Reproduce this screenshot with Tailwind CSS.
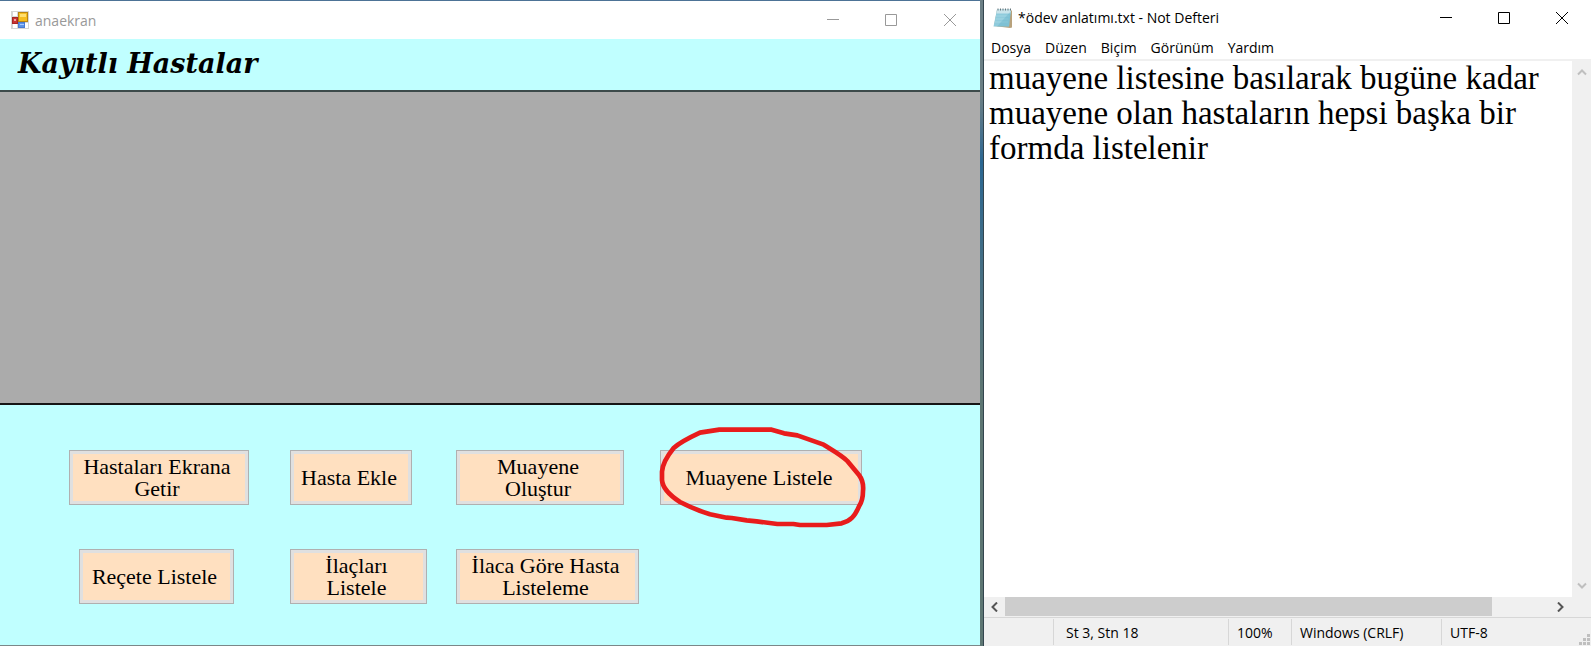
<!DOCTYPE html>
<html lang="tr">
<head>
<meta charset="utf-8">
<title>anaekran</title>
<script src="https://cdn.jsdelivr.net/npm/@tailwindcss/browser@4"></script>
</head>
<body class="h-screen overflow-hidden bg-white text-black font-['Open_Sans',sans-serif] text-[14px]">
<div class="grid h-full grid-cols-[980fr_4px_607fr]">

  <!-- Patient form -->
  <main class="flex min-w-0 flex-col border-t border-b border-t-[#4d7396] border-b-[#7b8788] bg-[#c0ffff]">
    <header class="flex h-[38px] shrink-0 items-center bg-white pl-[11px] text-[#999999]">
      <svg class="size-[18px]" viewBox="0 0 18 18" aria-hidden="true">
        <rect width="18" height="18" fill="#d5d5d5"/><path d="M2 1h4v4H2zM2 13h4v4H2zM14 12h3v5h-3z" fill="#fff"/>
        <rect x="7.500" y="1.500" width="9" height="9" fill="#f5bd20" stroke="#b98511"/><path d="M9 3h6v3H9z" fill="#ffdf70"/>
        <rect x="1.500" y="6.500" width="5" height="6" fill="#c83434" stroke="#a82424"/><path d="M3 8h2v2H3z" fill="#f3a0a0"/>
        <rect x="7.500" y="11.500" width="6" height="5" fill="#5b92e8" stroke="#4a7bd0"/><path d="M9 13h4v1H9z" fill="#a9ccff"/>
      </svg>
      <span class="ml-[6px]">anaekran</span>
      <div class="ml-auto flex h-full">
        <button class="grid w-[58px] place-items-center" aria-label="Simge durumuna küçült"><svg class="size-3" viewBox="0 0 12 12"><path d="M0 5.500h12" stroke="#999"/></svg></button>
        <button class="grid w-[58px] place-items-center" aria-label="Ekranı kapla"><svg class="size-3" viewBox="0 0 12 12"><path d="M.5.5h11v11H.5z" fill="none" stroke="#999"/></svg></button>
        <button class="grid w-[60px] place-items-center" aria-label="Kapat"><svg class="size-3" viewBox="0 0 12 12"><path d="M0 0l12 12M12 0L0 12" stroke="#999"/></svg></button>
      </div>
    </header>
    <h1 class="h-[51px] shrink-0 pl-[18px] font-['DejaVu_Serif',serif] text-[27px] leading-[50px] font-bold italic whitespace-nowrap">Kayıtlı Hastalar</h1>
    <section class="min-h-0 flex-1 border-y-2 border-t-[#3c4a4a] border-b-[#151515] bg-[#ababab]" aria-label="Kayıtlı hastalar"></section>
    <section class="grid h-[240px] shrink-0 grid-cols-[69fr_221fr_166fr_204fr_320fr] grid-rows-[55px_55px] gap-y-[44px] pt-[45px] font-['Liberation_Serif',serif] text-[22px] leading-[22px]">
      <button class="col-start-2 w-[180px] border border-[#b0b0b0] bg-[#ffe0c0] pr-1 shadow-[inset_0_0_0_3px_#e0e0e0]">Hastaları Ekrana<br>Getir</button>
      <button class="w-[122px] border border-[#b0b0b0] bg-[#ffe0c0] pr-1 shadow-[inset_0_0_0_3px_#e0e0e0]">Hasta Ekle</button>
      <button class="w-[168px] border border-[#b0b0b0] bg-[#ffe0c0] pr-1 shadow-[inset_0_0_0_3px_#e0e0e0]">Muayene<br>Oluştur</button>
      <div class="relative w-[202px]">
        <button class="size-full border border-[#b0b0b0] bg-[#ffe0c0] pr-1 shadow-[inset_0_0_0_3px_#e0e0e0]">Muayene Listele</button>
        <svg class="pointer-events-none absolute -top-[50px] -left-[20px] h-[150px] w-[260px] max-w-none" viewBox="0 0 780 450" aria-hidden="true">
          <path d="M180 98L238 89H395L432 100L472 106L551 134C590 158 608 168 622 183L657 225Q672 245 669 273Q669 300 658 317C644 350 632 362 605 370L560 375H480L460 372H412L350 364L320 361L275 354L260 353L210 343Q165 329 120 306Q68 272 66 240V215Q68 185 101 144C120 127 150 112 180 98Z" fill="none" stroke="#e81c1c" stroke-width="14" stroke-linejoin="round"/>
        </svg>
      </div>
      <button class="col-start-2 ml-[10px] w-[155px] border border-[#b0b0b0] bg-[#ffe0c0] pr-1 shadow-[inset_0_0_0_3px_#e0e0e0]">Reçete Listele</button>
      <button class="w-[137px] border border-[#b0b0b0] bg-[#ffe0c0] pr-1 shadow-[inset_0_0_0_3px_#e0e0e0]">İlaçları<br>Listele</button>
      <button class="w-[183px] border border-[#b0b0b0] bg-[#ffe0c0] pr-1 shadow-[inset_0_0_0_3px_#e0e0e0]">İlaca Göre Hasta<br>Listeleme</button>
    </section>
  </main>

  <!-- Desktop visible between the windows -->
  <div class="border-r border-[#34464f] bg-linear-to-b from-[#6b7f85] from-15% via-[#2a6792] via-25% to-[#5d7673] to-60%"></div>

  <!-- Notepad -->
  <section class="flex min-w-0 flex-col bg-white">
    <header class="flex h-[35px] shrink-0 items-center pl-[9px]">
      <svg class="h-5 w-5" viewBox="0 0 20 20" aria-hidden="true">
        <path d="M4 2l15 .5v17l-2 .5L1 18z" fill="#b8a27c"/>
        <path d="M4 1.500h14L16 18.500H.5z" fill="#8fcbdc"/><path d="M4 1.500h14l-.4 4H3.300z" fill="#c9e4eb"/>
        <path d="M3 8h13M2.500 11h13M2 14h13" stroke="#a3d6e3"/><path d="M4 18.500L18 3 16 18.500z" fill="#65b2c9" opacity=".4"/>
        <path d="M5 .5v2M7.500.5v2M10 .5v2M12.500.5v2M15 .5v2M17.500.5v2" stroke="#65747a"/>
      </svg>
      <span class="ml-[5px] whitespace-nowrap">*ödev anlatımı.txt - Not Defteri</span>
      <div class="ml-auto flex h-full">
        <button class="grid w-[58px] place-items-center" aria-label="Simge durumuna küçült"><svg class="size-3" viewBox="0 0 12 12"><path d="M0 5.500h12" stroke="#000"/></svg></button>
        <button class="grid w-[58px] place-items-center" aria-label="Ekranı kapla"><svg class="size-3" viewBox="0 0 12 12"><path d="M.5.5h11v11H.5z" fill="none" stroke="#000"/></svg></button>
        <button class="grid w-[58px] place-items-center" aria-label="Kapat"><svg class="size-3" viewBox="0 0 12 12"><path d="M0 0l12 12M12 0L0 12" stroke="#000"/></svg></button>
      </div>
    </header>
    <nav class="flex h-[26px] shrink-0 items-center gap-[14px] border-b-2 border-[#f0f0f0] pl-[7px]">
      <button>Dosya</button><button>Düzen</button><button>Biçim</button><button>Görünüm</button><button>Yardım</button>
    </nav>
    <div class="flex min-h-0 flex-1">
      <textarea aria-label="Metin" wrap="off" spellcheck="false" class="min-w-0 flex-1 resize-none overflow-hidden pl-[5px] font-['Liberation_Serif',serif] text-[33px] leading-[35px] outline-none">muayene listesine basılarak bugüne kadar
muayene olan hastaların hepsi başka bir
formda listelenir</textarea>
      <div class="flex w-[19px] shrink-0 flex-col items-center justify-between bg-[#f0f0f0] py-[7px]">
        <button aria-label="Yukarı kaydır"><svg class="block h-[8px] w-[10px]" viewBox="0 0 10 8"><path d="M1 6.500l4-4 4 4" fill="none" stroke="#bfbfbf" stroke-width="2"/></svg></button>
        <button aria-label="Aşağı kaydır"><svg class="block h-[8px] w-[10px]" viewBox="0 0 10 8"><path d="M1 1.500l4 4 4-4" fill="none" stroke="#bfbfbf" stroke-width="2"/></svg></button>
      </div>
    </div>
    <div class="flex h-[19px] shrink-0 bg-[#f0f0f0]">
      <button class="grid w-[21px] place-items-center" aria-label="Sola kaydır"><svg class="h-[10px] w-[8px]" viewBox="0 0 8 10"><path d="M6 .5L1.500 5 6 9.500" fill="none" stroke="#555" stroke-width="2"/></svg></button>
      <div class="grid flex-1 grid-cols-[487fr_57fr]"><div class="bg-[#cdcdcd]"></div></div>
      <button class="mr-[21px] grid w-[21px] place-items-center" aria-label="Sağa kaydır"><svg class="h-[10px] w-[8px]" viewBox="0 0 8 10"><path d="M2 .5L6.500 5 2 9.500" fill="none" stroke="#555" stroke-width="2"/></svg></button>
    </div>
    <footer class="grid h-[30px] shrink-0 grid-cols-[69fr_175fr_63fr_150fr_150fr] bg-[#f0f0f0] pt-px">
      <div class="border-t border-[#d7d7d7] pt-px pb-px"></div>
      <div class="border-t border-[#d7d7d7] pt-px pb-px"><div class="flex h-full items-center border-l border-[#d7d7d7] pl-[12px]">St 3, Stn 18</div></div>
      <div class="border-t border-[#d7d7d7] pt-px pb-px"><div class="flex h-full items-center border-l border-[#d7d7d7] pl-[8px]">100%</div></div>
      <div class="border-t border-[#d7d7d7] pt-px pb-px"><div class="flex h-full items-center border-l border-[#d7d7d7] pl-[8px] whitespace-nowrap">Windows (CRLF)</div></div>
      <div class="border-t border-[#d7d7d7] pt-px pb-px"><div class="flex h-full items-center border-l border-[#d7d7d7] pl-[8px]">UTF-8
        <svg class="mr-px ml-auto size-[11px] self-end" viewBox="0 0 11 11" aria-hidden="true"><path d="M8 0h3v3H8zM8 4h3v3H8zM8 8h3v3H8zM4 4h3v3H4zM4 8h3v3H4zM0 8h3v3H0z" fill="#bfbfbf"/></svg></div></div>
    </footer>
  </section>
</div>
</body>
</html>
